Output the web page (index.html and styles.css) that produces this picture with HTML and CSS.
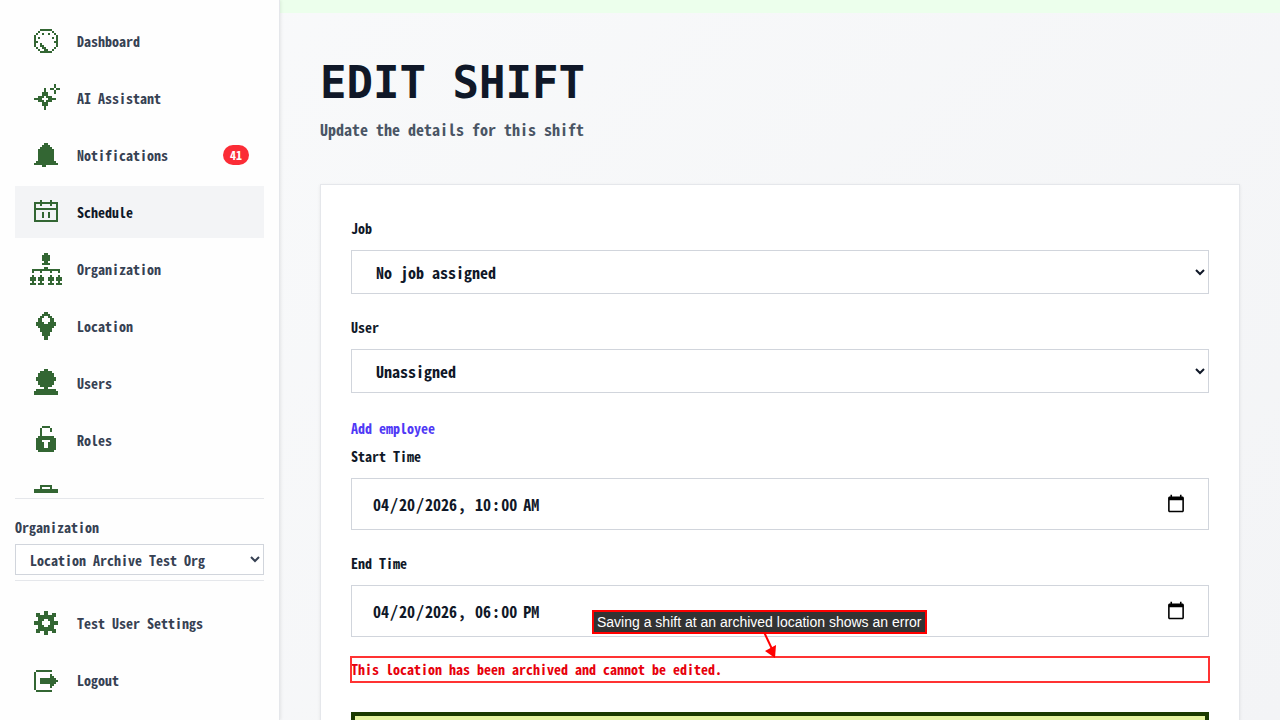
FILE: index.html
```html
<!DOCTYPE html>
<html lang="en">
<head>
<meta charset="utf-8">
<title>Edit Shift</title>
<link rel="stylesheet" href="styles.css">
</head>
<body>
<aside class="sidebar">
  <nav class="nav">
    <a class="nav-item" href="#"><svg class="icon" viewBox="0 -.5 16 16"><path d="M5 2h6M4 3h1M11 3h1M3 4h1M6 4h1M9 4h1M12 4h1M2 5h1M13 5h1M2 6h1M4 6h1M11 6h1M13 6h1M2 7h1M13 7h1M2 8h2M12 8h2M2 9h1M5 9h1M13 9h1M2 10h1M5 10h2M13 10h1M3 11h1M6 11h2M12 11h1M4 12h1M7 12h2M11 12h1M5 13h6"/></svg><span>Dashboard</span></a>
    <a class="nav-item" href="#"><svg class="icon" viewBox="0 -.5 16 16"><path d="M7 3h1M7 4h1M6 5h3M6 6h3M4 7h3M8 7h3M2 8h4M9 8h4M4 9h3M8 9h3M6 10h3M6 11h3M7 12h1M7 13h1M12 1h1M12 2h1M10 3h2M13 3h2M12 4h1M12 5h1"/></svg><span>AI Assistant</span></a>
    <a class="nav-item" href="#"><svg class="icon" viewBox="0 -.5 16 16"><path d="M7 2h2M6 3h4M5 4h6M4 5h8M4 6h8M4 7h8M4 8h8M4 9h8M4 10h8M3 11h10M2 12h12M6 13h2"/></svg><span>Notifications</span><span class="badge">41</span></a>
    <a class="nav-item active" href="#" aria-current="page"><svg class="icon" viewBox="0 -.5 16 16"><path d="M5 2h1M10 2h1M2 3h12M2 4h1M5 4h1M10 4h1M13 4h1M2 5h1M13 5h1M2 6h12M2 7h1M13 7h1M2 8h1M6 8h1M9 8h1M13 8h1M2 9h1M6 9h1M9 9h1M13 9h1M2 10h1M6 10h1M9 10h1M13 10h1M2 11h1M13 11h1M2 12h12"/></svg><span>Schedule</span></a>
    <a class="nav-item" href="#"><svg class="icon" viewBox="0 -.5 16 16"><path d="M7 0h2M6 1h4M6 2h4M6 3h4M7 4h2M6 5h4M7 7h2M1 8h14M1 9h1M5 9h1M10 9h1M14 9h1M1 11h1M5 11h1M10 11h1M14 11h1M0 12h3M4 12h3M9 12h3M13 12h3M0 13h3M4 13h3M9 13h3M13 13h3M1 14h1M5 14h1M10 14h1M14 14h1M0 15h3M4 15h3M9 15h3M13 15h3"/></svg><span>Organization</span></a>
    <a class="nav-item" href="#"><svg class="icon" viewBox="0 -.5 16 16"><path d="M7 1h2M6 2h4M5 3h2M9 3h2M4 4h2M10 4h2M4 5h2M10 5h2M3 6h4M9 6h4M3 7h10M4 8h8M5 9h6M5 10h6M6 11h4M6 12h4M7 13h2M7 14h2"/></svg><span>Location</span></a>
    <a class="nav-item" href="#"><svg class="icon" viewBox="0 -.5 16 16"><path d="M7 1h2M5 2h6M4 3h8M4 4h8M3 5h10M3 6h10M4 7h8M4 8h8M5 9h6M7 10h2M3 11h10M2 12h12M2 13h12"/></svg><span>Users</span></a>
    <a class="nav-item" href="#"><svg class="icon" viewBox="0 -.5 16 16"><path d="M6 1h4M5 2h1M10 2h1M5 3h1M10 3h1M5 4h1M5 5h1M4 6h8M3 7h10M3 8h3M10 8h3M3 9h4M9 9h4M3 10h4M9 10h4M3 11h4M9 11h4M3 12h10M4 13h8"/></svg><span>Roles</span></a>
    <a class="nav-item" href="#" aria-label="Jobs"><svg class="icon" viewBox="0 -.5 16 16"><path d="M5 2h6M5 3h1M10 3h1M2 4h12M2 5h12M2 6h12M2 7h12M2 8h5M9 8h5M2 9h12M2 10h12M2 11h12M2 12h12"/></svg></a>
  </nav>
  <div class="org">
    <label for="org">Organization</label>
    <select id="org" class="org-select"><option>Location Archive Test Org</option></select>
  </div>
  <div class="account">
    <a class="nav-item" href="#"><svg class="icon" viewBox="0 -.5 16 16"><path d="M7 2h2M3 3h2M7 3h2M11 3h2M3 4h10M4 5h8M4 6h3M9 6h3M2 7h4M10 7h4M2 8h4M10 8h4M4 9h3M9 9h3M4 10h8M3 11h10M3 12h2M7 12h2M11 12h2M7 13h2"/></svg><span>Test User Settings</span></a>
    <a class="nav-item" href="#"><svg class="icon" viewBox="0 -.5 16 16"><path d="M3 3h8M2 4h1M2 5h1M10 5h1M2 6h1M10 6h2M2 7h1M5 7h8M2 8h1M5 8h9M2 9h1M5 9h8M2 10h1M10 10h2M2 11h1M10 11h1M2 12h1M3 13h8"/></svg><span>Logout</span></a>
  </div>
</aside>
<main class="main">
  <header class="page-header">
    <h1>EDIT SHIFT</h1>
    <p>Update the details for this shift</p>
  </header>
  <form class="card">
    <div class="field">
      <label for="job">Job</label>
      <select id="job"><option>No job assigned</option></select>
    </div>
    <div class="field">
      <label for="user">User</label>
      <select id="user"><option>Unassigned</option></select>
    </div>
    <a class="add-link" href="#">Add employee</a>
    <div class="field">
      <label for="start">Start Time</label>
      <input id="start" type="datetime-local" value="2026-04-20T10:00">
    </div>
    <div class="field">
      <label for="end">End Time</label>
      <input id="end" type="datetime-local" value="2026-04-20T18:00">
    </div>
    <div class="error" role="alert">This location has been archived and cannot be edited.
      <div class="callout">Saving a shift at an archived location shows an error<svg class="arrow" viewBox="0 0 20 28"><path d="M5 0L13 17" stroke="#f00" stroke-width="2"/><path d="M16 26L6 19L17 13Z" fill="#f00"/></svg></div>
    </div>
    <button class="save" type="submit" aria-label="Save"></button>
  </form>
</main>
</body>
</html>
```
FILE: styles.css
```css
* { box-sizing: border-box; }

body {
  margin: 0;
  height: 100vh;
  display: flex;
  overflow: hidden;
  background: linear-gradient(135deg, #f9fafb, #f3f4f6);
  color: #101828;
  font-family: "Noto Sans Mono CJK JP", "Liberation Mono", monospace;
  font-size: 14px;
  font-weight: 700;
}

a { color: inherit; text-decoration: none; }

.sidebar {
  flex: 0 0 280px;
  display: flex;
  flex-direction: column;
  padding: 15px 15px 14px;
  background: #fefefe;
  border-right: 1px solid #e5e7eb;
  box-shadow: 1px 0 3px rgba(0, 0, 0, 0.08);
  color: #364153;
  z-index: 1;
}

.nav {
  flex: 1;
  min-height: 0;
  overflow: hidden;
  display: flex;
  flex-direction: column;
  gap: 5px;
  margin-bottom: 5px;
}

.nav-item {
  flex: 0 0 52px;
  display: flex;
  align-items: center;
  gap: 15px;
  padding: 0 15px;
}

.nav-item.active { background: #f3f4f6; color: #101828; }

.icon {
  width: 32px;
  height: 32px;
  flex: none;
  stroke: #336633;
  stroke-width: 1;
  fill: none;
  shape-rendering: crispEdges;
}

.badge {
  margin-left: auto;
  padding: 0 7px;
  border-radius: 10px;
  background: #fb2c36;
  color: #fff;
  font-size: 12px;
  line-height: 20px;
}

.org {
  display: flex;
  flex-direction: column;
  padding: 17px 0 5px;
  border-top: 1px solid #e5e7eb;
}

.org label { line-height: 22px; margin-bottom: 6px; }

select, input, button { font: inherit; color: inherit; }

.org-select {
  width: 100%;
  height: 31px;
  padding: 0 10px;
  background: #fff;
  border: 1px solid #d1d5dc;
  border-radius: 0;
}

.account {
  display: flex;
  flex-direction: column;
  gap: 5px;
  padding-top: 16px;
  border-top: 1px solid #e5e7eb;
}

.main {
  flex: 1;
  min-width: 0;
  overflow-y: auto;
  scrollbar-width: none;
  padding: 40px;
  border-top: 13px solid #ecffec;
}

.page-header { margin-bottom: 40px; }

h1 {
  margin: 0;
  font-family: "DejaVu Sans Mono", monospace;
  font-size: 44px;
  line-height: 60px;
}

.page-header p {
  margin: 3px 0 0;
  padding-bottom: 1px;
  font-size: 16px;
  line-height: 27px;
  color: #4a5565;
}

.card {
  display: flex;
  flex-direction: column;
  padding: 30px;
  background: #fff;
  border: 1px solid #e5e7eb;
  box-shadow: 0 1px 3px rgba(0, 0, 0, 0.08);
}

.field { display: flex; flex-direction: column; margin-bottom: 20px; }
.field label { line-height: 27px; margin-bottom: 8px; }

.field select, .field input {
  width: 100%;
  padding: 0 20px;
  background: #fff;
  border: 1px solid #d1d5dc;
  border-radius: 0;
  font-size: 16px;
}

.field select { height: 44px; }
.field input { height: 52px; }

.field input::-webkit-calendar-picker-indicator {
  width: 20px;
  height: 20px;
}

.add-link { align-self: flex-start; line-height: 30px; color: #4f39f6; }

.error {
  position: relative;
  line-height: 25px;
  margin-bottom: 30px;
  outline: 2px solid #ff3333;
  outline-offset: -1px;
  color: #e7000b;
}

.callout {
  position: absolute;
  left: 241px;
  bottom: 48px;
  padding: 0 3px;
  border: 2px solid #f00;
  background: #333;
  color: #fff;
  font: 14px/20px "Liberation Sans", sans-serif;
  white-space: nowrap;
}

.arrow {
  position: absolute;
  left: 165px;
  top: 20px;
  width: 20px;
  height: 28px;
  fill: none;
}

.save {
  height: 60px;
  border: 4px solid #1a3a00;
  background: #e4f29e;
}
```
